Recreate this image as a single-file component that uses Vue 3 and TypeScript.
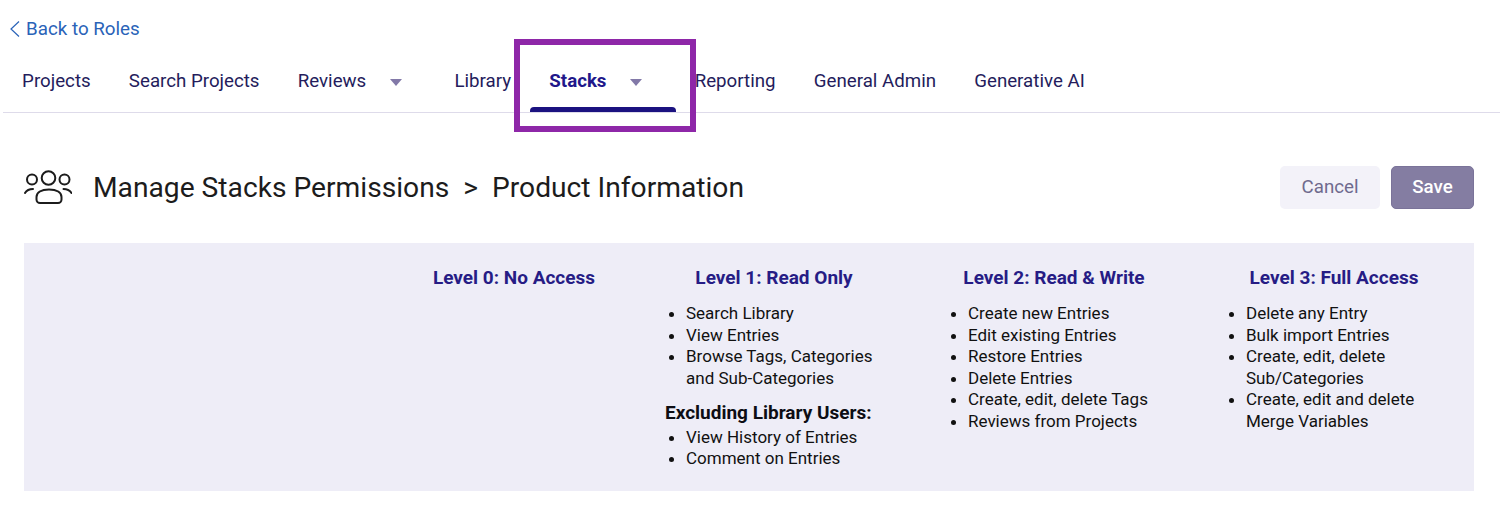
<script setup lang="ts">
interface NavItem {
  label: string
  caret?: boolean
  active?: boolean
}

interface Level {
  title: string
  key: string
  items: string[]
  extraTitle?: string
  extraItems?: string[]
}

const navItems: NavItem[] = [
  { label: 'Projects' },
  { label: 'Search Projects' },
  { label: 'Reviews', caret: true },
  { label: 'Library' },
  { label: 'Stacks', caret: true, active: true },
  { label: 'Reporting' },
  { label: 'General Admin' },
  { label: 'Generative AI' },
]

const levels: Level[] = [
  { title: 'Level 0: No Access', key: 'l0', items: [] },
  {
    title: 'Level 1: Read Only',
    key: 'l1',
    items: ['Search Library', 'View Entries', 'Browse Tags, Categories and Sub-Categories'],
    extraTitle: 'Excluding Library Users:',
    extraItems: ['View History of Entries', 'Comment on Entries'],
  },
  {
    title: 'Level 2: Read & Write',
    key: 'l2',
    items: [
      'Create new Entries',
      'Edit existing Entries',
      'Restore Entries',
      'Delete Entries',
      'Create, edit, delete Tags',
      'Reviews from Projects',
    ],
  },
  {
    title: 'Level 3: Full Access',
    key: 'l3',
    items: [
      'Delete any Entry',
      'Bulk import Entries',
      'Create, edit, delete Sub/Categories',
      'Create, edit and delete Merge Variables',
    ],
  },
]
</script>

<template>
  <div class="page">
    <a class="back-link" href="#">
      <svg class="back-icon" width="11" height="18" viewBox="0 0 11 18" fill="none">
        <path d="M10 1.5 2 9l8 7.5" stroke="#2a63b8" stroke-width="1.2" />
      </svg>
      Back to Roles
    </a>

    <nav class="tabs">
      <div
        v-for="item in navItems"
        :key="item.label"
        class="tab"
        :class="{ active: item.active }"
      >
        <span>{{ item.label }}</span>
        <span v-if="item.caret" class="caret" />
      </div>
    </nav>

    <!-- annotation round the Stacks tab -->
    <div class="highlight" />

    <div class="content">
      <header class="title-row">
        <svg class="people-icon" width="48" height="36" viewBox="0 0 48 36" fill="none">
          <circle cx="24.500" cy="9" r="6.800" />
          <circle cx="8" cy="10.500" r="5" />
          <circle cx="40.500" cy="10.500" r="5" />
          <path d="M16 34h18a3.500 3.500 0 0 0 3.500-3.500V28c0-4.500-4.500-7.500-12.500-7.500S12.500 23.500 12.500 28v2.500A3.500 3.500 0 0 0 16 34z" />
          <path d="M1 24c1.500-2.500 4-4 8-4" />
          <path d="M47.500 24c-1.500-2.500-4-4-8-4" />
        </svg>
        <h1 class="title">Manage Stacks Permissions<span class="sep">&gt;</span>Product Information</h1>
        <div class="actions">
          <button class="btn cancel" type="button">Cancel</button>
          <button class="btn save" type="button">Save</button>
        </div>
      </header>

      <section class="levels">
        <div v-for="level in levels" :key="level.key" class="level" :class="level.key">
          <h2 class="level-title">{{ level.title }}</h2>
          <div class="level-body">
            <ul v-if="level.items.length">
              <li v-for="text in level.items" :key="text">{{ text }}</li>
            </ul>
            <template v-if="level.extraTitle">
              <div class="extra-title">{{ level.extraTitle }}</div>
              <ul>
                <li v-for="text in level.extraItems" :key="text">{{ text }}</li>
              </ul>
            </template>
          </div>
        </div>
      </section>
    </div>
  </div>
</template>

<style scoped>
.page {
  position: relative;
  width: 1500px;
  height: 506px;
  box-sizing: border-box;
  padding-top: 18px;
  font-family: Roboto, "Liberation Sans", sans-serif;
  background: #fff;
  overflow: hidden;
}

.back-link {
  display: flex;
  align-items: center;
  gap: 6px;
  height: 22px;
  padding-left: 9px;
  font-size: 18.800px;
  color: #2a63b8;
  text-decoration: none;
}

.tabs {
  display: flex;
  margin: 20px 0 0 3px;
  height: 52px;
  border-bottom: 1px solid #dedbea;
}

.tab {
  position: relative;
  display: flex;
  align-items: flex-start;
  padding: 10px 19.100px 0;
  font-size: 18.720px;
  line-height: 22px;
  color: #241c5c;
}

.tab.active {
  font-weight: 700;
  color: #21178a;
}

.tab.active::after {
  content: "";
  position: absolute;
  left: 0;
  right: 0;
  bottom: 0;
  height: 5px;
  background: #1b1280;
  border-radius: 4px 4px 0 0;
}

.caret {
  width: 0;
  height: 0;
  margin: 9px 14px 0 24px;
  border-left: 6px solid transparent;
  border-right: 6px solid transparent;
  border-top: 7px solid #8279a8;
}

.highlight {
  position: absolute;
  left: 514px;
  top: 39px;
  width: 182px;
  height: 93px;
  box-sizing: border-box;
  border: 6px solid #8e27a8;
}

.content {
  padding: 0 26px 0 24px;
}

.title-row {
  display: flex;
  align-items: center;
  margin-top: 52px;
  height: 44px;
}

.people-icon {
  flex: none;
  stroke: #1c1c1c;
  stroke-width: 2;
  stroke-linecap: round;
}

.title {
  margin: 0 0 0 21px;
  font-size: 28.200px;
  font-weight: 400;
  color: #1c1c1c;
}

.sep {
  margin: 0 14px;
}

.actions {
  display: flex;
  gap: 11px;
  margin-left: auto;
}

.btn {
  height: 43px;
  border-radius: 5px;
  font-family: inherit;
  font-size: 18.700px;
  box-sizing: border-box;
}

.cancel {
  width: 100px;
  border: none;
  background: #f3f2f9;
  color: #6f6a8e;
}

.save {
  width: 83px;
  border: 1px solid #7a7399;
  background: #847da2;
  color: #fff;
  font-weight: 500;
}

.levels {
  display: grid;
  grid-template-columns: 370px 240px 280px 280px 280px;
  height: 248px;
  margin-top: 34px;
  background: #eeedf7;
}

.l0 {
  grid-column: 2;
}

.level-title {
  margin: 24px 0 0;
  font-size: 19px;
  line-height: 22px;
  font-weight: 700;
  text-align: center;
  color: #261c85;
}

.level-body {
  margin-top: 14px;
  padding-left: 31px;
  font-size: 17px;
  line-height: 21.500px;
  color: #111;
}

.l2 .level-body {
  padding-left: 33px;
}

.l3 .level-body {
  padding-left: 31px;
}

ul {
  margin: 0;
  padding-left: 21px;
}

li {
  max-width: 200px;
}

.extra-title {
  margin-top: 13px;
  font-size: 19px;
  line-height: 22px;
  font-weight: 700;
  color: #0d0d14;
}

.extra-title + ul {
  margin-top: 2.500px;
}
</style>

<style>
body {
  margin: 0;
  background: #fff;
}
</style>
